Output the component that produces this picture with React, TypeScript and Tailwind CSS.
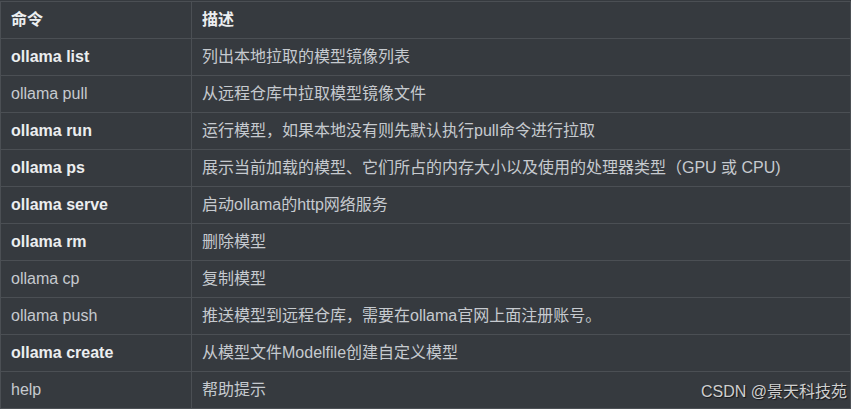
import React from "react"

const rows: { cmd: string; desc: string; bold?: boolean }[] = [
  { cmd: "ollama list", desc: "列出本地拉取的模型镜像列表", bold: true },
  { cmd: "ollama pull", desc: "从远程仓库中拉取模型镜像文件" },
  { cmd: "ollama run", desc: "运行模型，如果本地没有则先默认执行pull命令进行拉取", bold: true },
  { cmd: "ollama ps", desc: "展示当前加载的模型、它们所占的内存大小以及使用的处理器类型（GPU 或 CPU)", bold: true },
  { cmd: "ollama serve", desc: "启动ollama的http网络服务", bold: true },
  { cmd: "ollama rm", desc: "删除模型", bold: true },
  { cmd: "ollama cp", desc: "复制模型" },
  { cmd: "ollama push", desc: "推送模型到远程仓库，需要在ollama官网上面注册账号。" },
  { cmd: "ollama create", desc: "从模型文件Modelfile创建自定义模型", bold: true },
  { cmd: "help", desc: "帮助提示" },
]

export default function App() {
  return (
    <div
      className="relative w-[851px] h-[409px] overflow-hidden bg-[#363a3f] pt-px text-[16px] text-[#c6cacf]"
      style={{ fontFamily: '"Liberation Sans", Arial, "Noto Sans CJK SC", sans-serif' }}
    >
      <table className="w-full border-collapse">
        <thead>
          <tr className="h-[37px]">
            <th className="w-[191px] border border-[#4b4f54] px-[10px] text-left font-bold text-[#eceef0]">
              命令
            </th>
            <th className="border border-[#4b4f54] px-[10px] text-left font-bold text-[#eceef0]">
              描述
            </th>
          </tr>
        </thead>
        <tbody>
          {rows.map((r) => (
            <tr key={r.cmd} className="h-[37px]">
              <td
                className={
                  r.bold
                    ? "border border-[#4b4f54] px-[10px] font-bold text-[#eceef0]"
                    : "border border-[#4b4f54] px-[10px]"
                }
              >
                {r.cmd}
              </td>
              <td className="border border-[#4b4f54] px-[10px]">{r.desc}</td>
            </tr>
          ))}
        </tbody>
      </table>

      {/* 水印 */}
      <div
        className="absolute right-[4px] bottom-[5px] text-[#cfcfcf]"
        style={{ textShadow: "1px 1px 1px rgba(0,0,0,0.6)" }}
      >
        CSDN @景天科技苑
      </div>
    </div>
  )
}
